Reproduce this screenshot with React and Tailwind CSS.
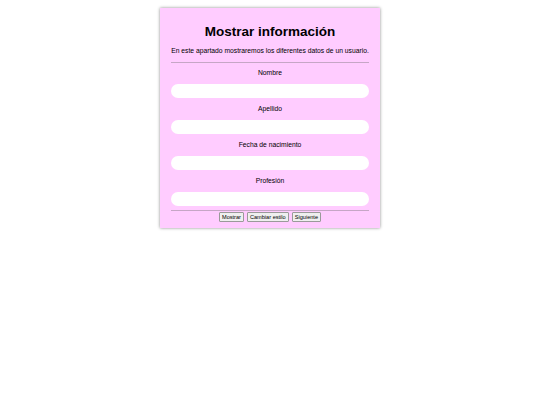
const campos = ['Nombre', 'Apellido', 'Fecha de nacimiento', 'Profesión'];

export default function App() {
  return (
    <div className="min-h-[405px] bg-white pt-[8px] font-['Liberation_Sans',Arial,sans-serif] text-black">
      <div className="mx-auto w-[220px] h-[220px] bg-[#ffccff] px-[11px] pt-[15px] shadow-[0_0_3px_rgba(0,0,0,0.45)]">
        <h1 className="text-center text-[13.5px] leading-[17px] font-bold">Mostrar información</h1>
        <p className="mt-[7px] text-center text-[6.75px] leading-[8px] whitespace-nowrap">
          En este apartado mostraremos los diferentes datos de un usuario.
        </p>
        <div className="mt-[7px] h-px bg-[#c6a6c6]" />
        {campos.map((c, i) => (
          <div key={c} className={i === 0 ? 'mt-[6px]' : 'mt-[7px]'}>
            <label className="block text-center text-[6.75px] leading-[8px]">{c}</label>
            <input className="mt-[7px] block h-[14px] w-full rounded-full bg-white outline-none" />
          </div>
        ))}
        <div className="mt-[3.5px] h-px bg-[#c6a6c6]" />
        <div className="mt-[1.5px] flex justify-center gap-[3px]">
          {['Mostrar', 'Cambiar estilo', 'Siguiente'].map((b) => (
            <button
              key={b}
              className="h-[10px] px-[2px] border border-[#9a9a9a] bg-[#efefef] text-[5.6px] leading-[8px] rounded-[1px]"
            >
              {b}
            </button>
          ))}
        </div>
      </div>
    </div>
  );
}
